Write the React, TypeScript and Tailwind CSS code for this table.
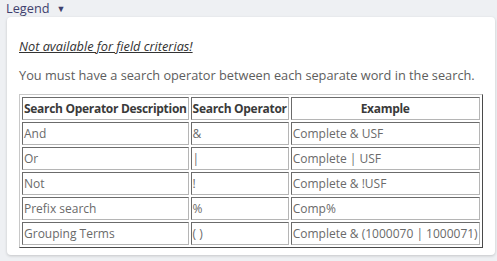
const rows = [
  { desc: 'And', op: '&', example: 'Complete & USF' },
  { desc: 'Or', op: '|', example: 'Complete | USF' },
  { desc: 'Not', op: '!', example: 'Complete & !USF' },
  { desc: 'Prefix search', op: '%', example: 'Comp%' },
  { desc: 'Grouping Terms', op: '( )', example: 'Complete & (1000070 | 1000071)' },
];

// classic bevelled cell border, like a border="1" table
const cell =
  'border border-t-[#6b6b6b] border-l-[#6b6b6b] border-b-[#b5b5b5] border-r-[#b5b5b5] px-[1px] py-[2px] leading-[17px] whitespace-nowrap';

const App = () => {
  return (
    <div className="min-h-screen bg-[#eef0f3] font-['Open_Sans',sans-serif] text-[12.75px]">
      {/* Legend toggle */}
      <div className="flex items-center h-[17px] pl-[6px] text-[#3e3f6d]">
        <span className="leading-[17px]">Legend</span>
        <span className="ml-[7px] text-[9px] leading-none">▼</span>
      </div>

      {/* Legend panel */}
      <div className="ml-[7px] w-[488px] bg-white rounded-[4px] shadow-[0_1px_3px_rgba(0,0,0,0.18)] px-[12px] pt-[20px] pb-[7px]">
        <p className="italic underline text-[#333] leading-[18px]">Not available for field criterias!</p>
        <p className="mt-[11px] text-[#5d5d5d] leading-[18px]">
          You must have a search operator between each separate word in the search.
        </p>

        <table className="mt-[10px] text-[12px] border-separate border-spacing-[2px] border border-t-[#c8c8c8] border-l-[#c8c8c8] border-b-[#4a4a4a] border-r-[#4a4a4a]">
          <thead>
            <tr className="text-[#3a3a3a] font-semibold tracking-[-0.3px]">
              <th className={cell + ' text-left'}>Search Operator Description</th>
              <th className={cell + ' text-left'}>Search Operator</th>
              <th className={cell + ' text-center'}>Example</th>
            </tr>
          </thead>
          <tbody className="text-[#6a6a6a]">
            {rows.map((r) => (
              <tr key={r.desc}>
                <td className={cell}>{r.desc}</td>
                <td className={cell}>{r.op}</td>
                <td className={cell}>{r.example}</td>
              </tr>
            ))}
          </tbody>
        </table>
      </div>
    </div>
  );
};

export default App;
